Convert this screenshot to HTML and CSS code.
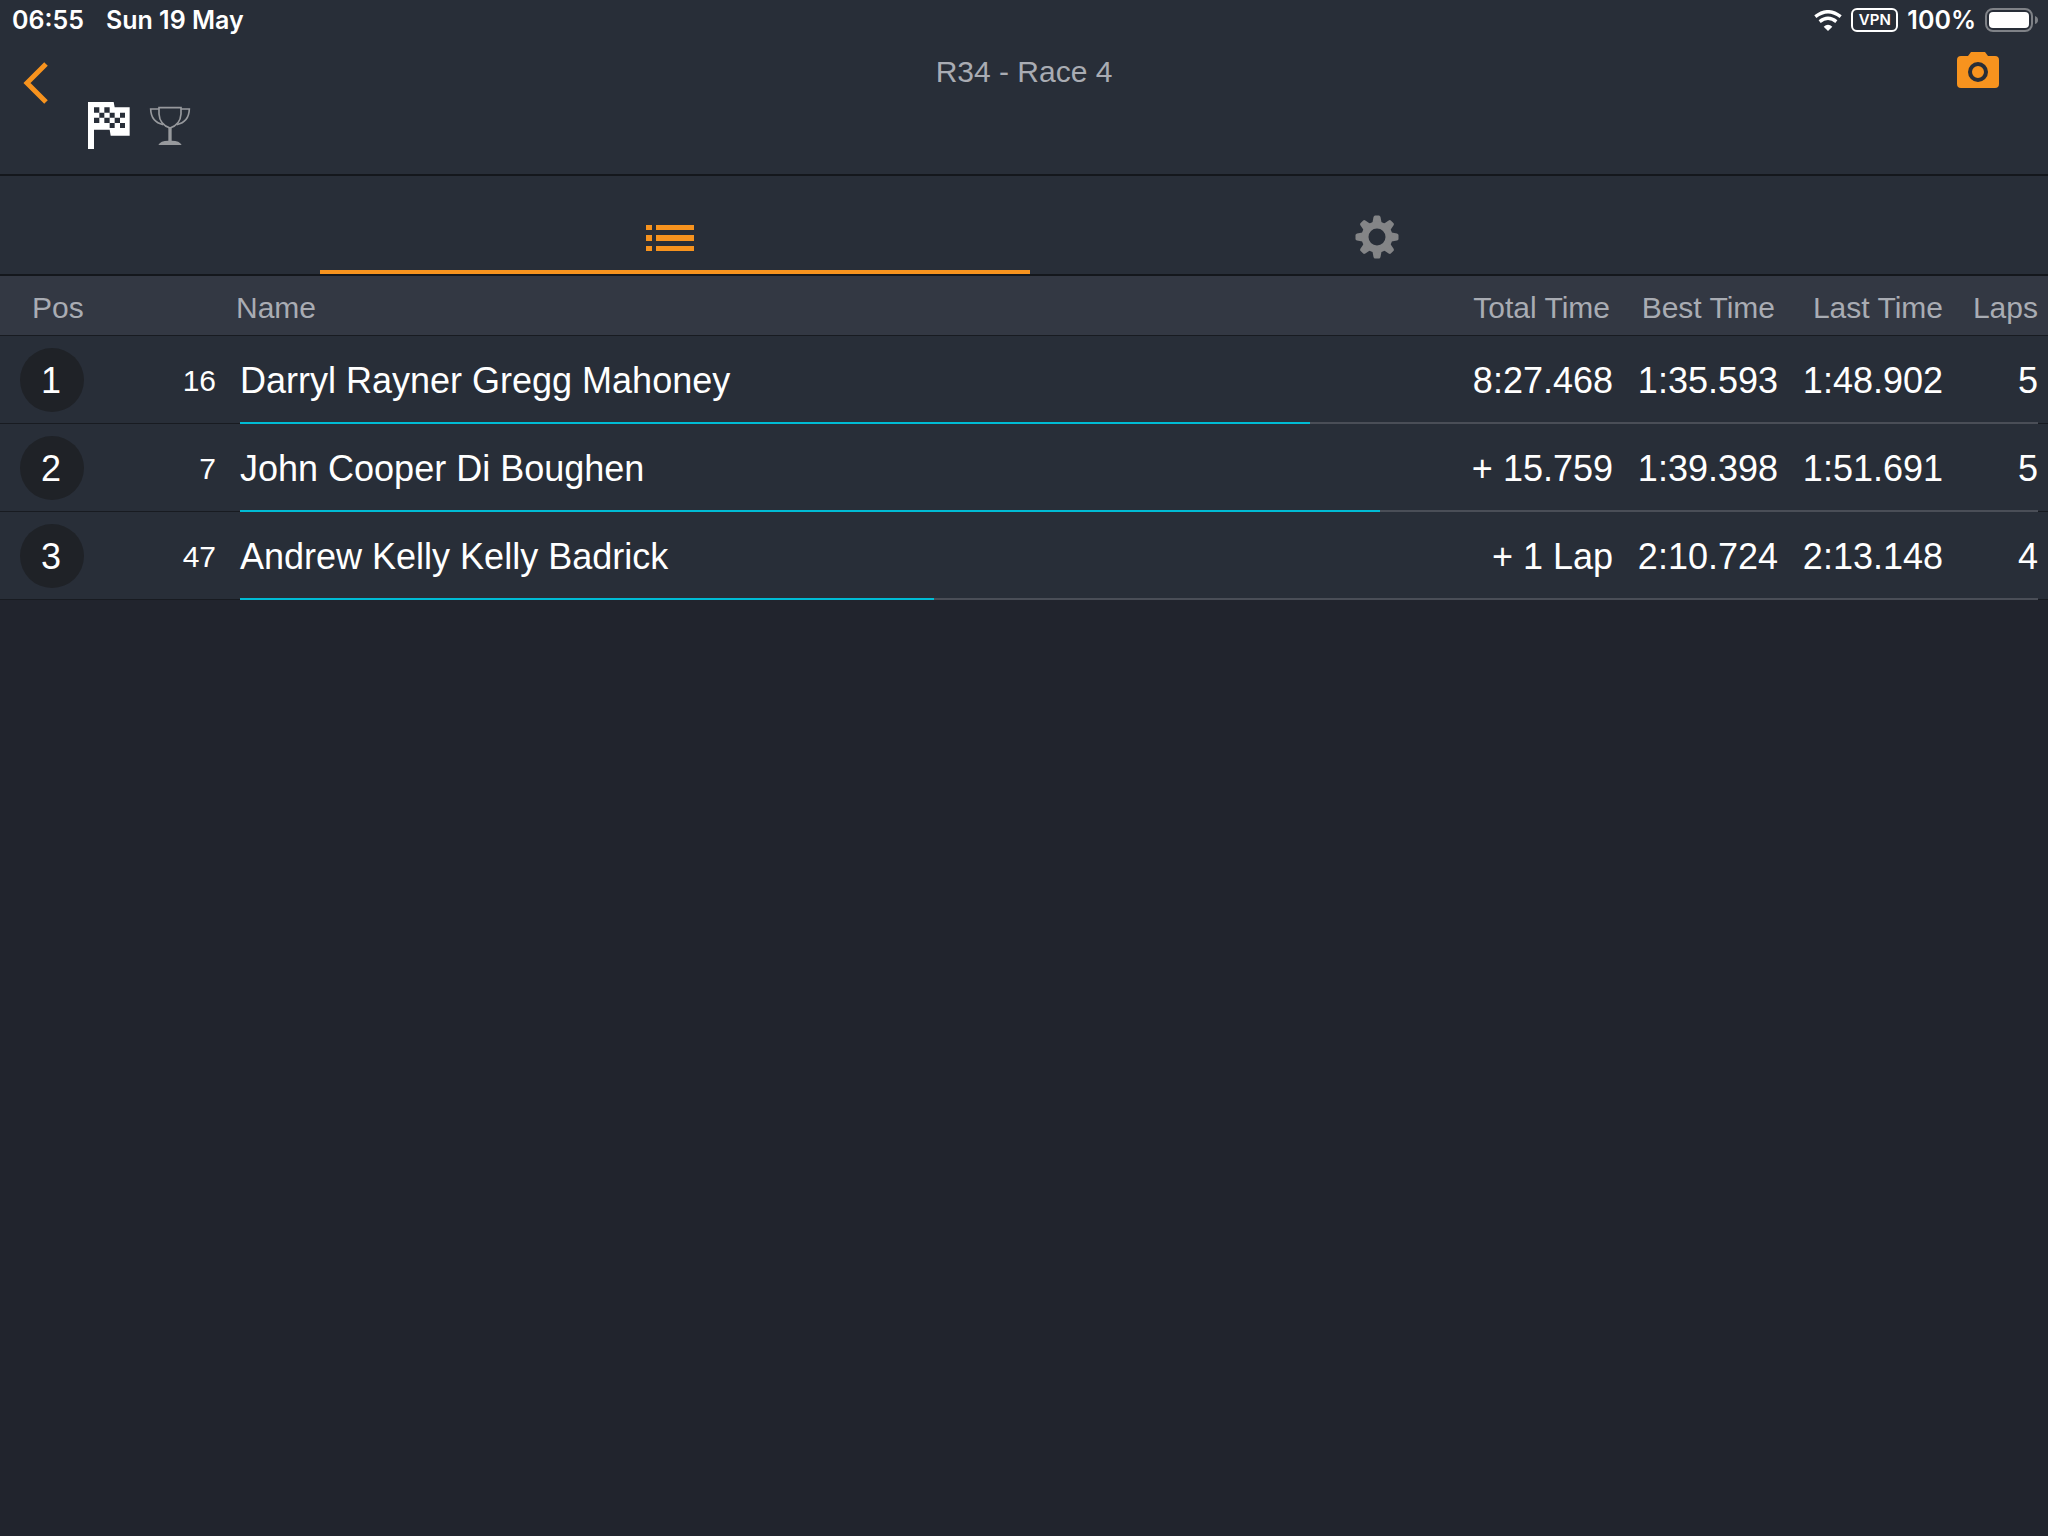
FILE: index.html
```html
<!DOCTYPE html>
<html lang="en">
<head>
<meta charset="utf-8">
<meta name="viewport" content="width=device-width, initial-scale=1">
<title>R34 - Race 4</title>
<link rel="stylesheet" href="styles.css">
</head>
<body>
<div class="status-bar">
  <div class="status-group status-left">
    <time>06:55</time>
    <span>Sun 19 May</span>
  </div>
  <div class="status-group status-right">
    <svg class="wifi" viewBox="0 0 84 63" aria-hidden="true">
      <path d="M4 20 Q42 -10 80 20" fill="none" stroke="#fff" stroke-width="10"/>
      <path d="M17 35 Q42 15 67 35" fill="none" stroke="#fff" stroke-width="10"/>
      <path d="M42 63 L29 50 Q42 39 55 50 Z" fill="#fff"/>
    </svg>
    <span class="vpn">VPN</span>
    <span>100%</span>
    <svg class="battery" viewBox="0 0 54 24" aria-hidden="true">
      <rect x="1" y="1" width="46" height="22" rx="7" fill="none" stroke="#7f8287" stroke-width="2"/>
      <rect x="4" y="4" width="40" height="16" rx="4" fill="#fff"/>
      <path d="M50 8 Q53 9 53 12 Q53 15 50 16 Z" fill="#7f8287"/>
    </svg>
  </div>
</div>

<header class="nav-bar">
  <div class="nav-left">
    <button class="icon-button" type="button" aria-label="Back">
      <svg class="chevron" viewBox="0 0 26 44" aria-hidden="true">
        <path d="M23 3 L4 22 L23 41" fill="none" stroke="#f7931e" stroke-width="5"/>
      </svg>
    </button>
    <div class="race-flags">
      <svg class="flag" viewBox="0 0 132 147" role="img" aria-label="Finished">
        <path d="M3 3 H80 L83 19 H128 V104 H71 L68 86 H21 V144 H3 Z" fill="#fff"/>
        <path d="M21 19h16v16h-16z M52 19h16v16h-16z M37 35h15v15h-15z M68 35h15v15h-15z M99 35h15v15h-15z M21 50h16v16h-16z M52 50h16v16h-16z M83 50h16v16h-16z M68 66h15v15h-15z M99 66h15v15h-15z" fill="#282e38"/>
      </svg>
      <svg class="trophy" viewBox="0 0 126 120" role="img" aria-label="Results">
        <g fill="none" stroke="#97999d" stroke-width="5">
          <path d="M30 5 H96 V24 Q94 56 63 66 Q32 56 30 24 Z"/>
          <path d="M30 9 H5 Q6 48 43 56"/>
          <path d="M96 9 H121 Q120 48 83 56"/>
        </g>
        <path d="M58 64 H68 V104 Q92 104 98 117 H28 Q34 104 58 104 Z" fill="#97999d"/>
      </svg>
    </div>
  </div>
  <h1 class="title">R34 - Race 4</h1>
  <div class="nav-right">
    <button class="icon-button" type="button" aria-label="Take photo">
      <svg class="camera" viewBox="0 0 42 36" aria-hidden="true">
        <path d="M4 4 H11 L14 0 H28 L31 4 H38 Q42 4 42 8 V32 Q42 36 38 36 H4 Q0 36 0 32 V8 Q0 4 4 4 Z" fill="#f7931e"/>
        <circle cx="21" cy="20" r="8" fill="none" stroke="#282e38" stroke-width="4"/>
      </svg>
    </button>
  </div>
</header>

<nav class="tabs">
  <button class="tab tab-active" type="button" aria-label="Results list">
    <svg class="list-icon" viewBox="0 0 48 28" aria-hidden="true">
      <path d="M0 1h6v5H0z M10 1h38v5H10z M0 11h6v6H0z M10 11h38v6H10z M0 22h6v5H0z M10 22h38v5H10z" fill="#f7931e"/>
    </svg>
  </button>
  <button class="tab" type="button" aria-label="Settings">
    <svg class="gear" viewBox="-22 -22 44 44" aria-hidden="true">
      <defs><path id="tooth" d="M-5 -12 L-3.500 -20 Q-3 -21.500 -2 -21.500 H2 Q3 -21.500 3.500 -20 L5 -12 Z"/></defs>
      <g fill="#848587">
        <use href="#tooth"/>
        <use href="#tooth" transform="rotate(45)"/>
        <use href="#tooth" transform="rotate(90)"/>
        <use href="#tooth" transform="rotate(135)"/>
        <use href="#tooth" transform="rotate(180)"/>
        <use href="#tooth" transform="rotate(225)"/>
        <use href="#tooth" transform="rotate(270)"/>
        <use href="#tooth" transform="rotate(315)"/>
      </g>
      <circle r="12" fill="none" stroke="#848587" stroke-width="7"/>
    </svg>
  </button>
</nav>

<table class="results">
  <colgroup>
    <col class="col-pos"><col class="col-number"><col>
    <col class="col-total"><col class="col-time"><col class="col-time"><col class="col-laps">
  </colgroup>
  <thead>
    <tr>
      <th class="head-pos" scope="col">Pos</th>
      <td></td>
      <th class="head-name" scope="col">Name</th>
      <th class="head-time" scope="col">Total Time</th>
      <th class="head-time" scope="col">Best Time</th>
      <th scope="col">Last Time</th>
      <th class="laps" scope="col">Laps</th>
    </tr>
  </thead>
  <tbody>
    <tr>
      <td class="pos"><span class="badge">1</span></td>
      <td class="number">16</td>
      <td class="name">Darryl Rayner Gregg Mahoney</td>
      <td>8:27.468</td>
      <td>1:35.593</td>
      <td>1:48.902</td>
      <td class="laps">5<div class="track"><div class="fill" style="width: 59.5%"></div></div></td>
    </tr>
    <tr>
      <td class="pos"><span class="badge">2</span></td>
      <td class="number">7</td>
      <td class="name">John Cooper Di Boughen</td>
      <td>+ 15.759</td>
      <td>1:39.398</td>
      <td>1:51.691</td>
      <td class="laps">5<div class="track"><div class="fill" style="width: 63.4%"></div></div></td>
    </tr>
    <tr>
      <td class="pos"><span class="badge">3</span></td>
      <td class="number">47</td>
      <td class="name">Andrew Kelly Kelly Badrick</td>
      <td>+ 1 Lap</td>
      <td>2:10.724</td>
      <td>2:13.148</td>
      <td class="laps">4<div class="track"><div class="fill" style="width: 38.6%"></div></div></td>
    </tr>
  </tbody>
</table>
</body>
</html>
```
FILE: styles.css
```css
* {
  box-sizing: border-box;
}

body {
  margin: 0;
  min-height: 100vh;
  background: #21242d;
  color: #fff;
  font-family: "Liberation Sans", Arial, sans-serif;
}

svg {
  display: block;
}

button {
  border: 0;
  background: none;
  padding: 0;
  cursor: pointer;
}

/* Status bar */

.status-bar {
  display: flex;
  justify-content: space-between;
  align-items: center;
  height: 40px;
  padding: 0 9px 0 12px;
  background: #282e38;
  font: 600 25px/40px Inter, sans-serif;
}

.status-group {
  display: flex;
  align-items: center;
}

.status-left {
  gap: 22px;
}

.status-right {
  gap: 9px;
}

.wifi {
  width: 28px;
  height: 21px;
}

.vpn {
  width: 47px;
  height: 24px;
  border: 2px solid #fff;
  border-radius: 6px;
  font-size: 15px;
  line-height: 20px;
  text-align: center;
}

.battery {
  width: 54px;
  height: 24px;
}

/* Navigation bar */

.nav-bar {
  display: grid;
  grid-template-columns: 1fr auto 1fr;
  height: 136px;
  background: #282e38;
  border-bottom: 2px solid #14171c;
}

.nav-left {
  display: flex;
  align-items: flex-start;
  gap: 38px;
  padding: 21px 0 0 23px;
}

.chevron {
  width: 26px;
  height: 44px;
}

.race-flags {
  display: flex;
  align-items: center;
  gap: 18px;
  padding-top: 40px;
}

.flag {
  width: 44px;
  height: 49px;
}

.trophy {
  width: 42px;
  height: 40px;
}

.title {
  margin: 0;
  padding-top: 14px;
  color: #a9acb3;
  font-size: 30px;
  font-weight: 400;
  line-height: 36px;
}

.nav-right {
  display: flex;
  justify-content: flex-end;
  align-items: flex-start;
  padding: 12px 49px 0 0;
}

.camera {
  width: 42px;
  height: 36px;
}

/* Tabs */

.tabs {
  display: flex;
  height: 100px;
  padding: 0 320px;
  background: #282e38;
  border-bottom: 2px solid #14171c;
}

.tab {
  display: flex;
  flex: 1;
  justify-content: center;
  align-items: flex-end;
  padding: 0 5px 15px 0;
}

.tab-active {
  flex: 0 0 710px;
  padding: 0 10px 18px 0;
  border-bottom: 4px solid #f7931e;
}

.list-icon {
  width: 48px;
  height: 28px;
}

.gear {
  width: 44px;
  height: 44px;
}

/* Results */

.results {
  width: 100%;
  table-layout: fixed;
  border-collapse: separate;
  border-spacing: 0;
  text-align: right;
}

.col-pos { width: 104px; }
.col-number { width: 112px; }
.col-total { width: 190px; }
.col-time { width: 165px; }
.col-laps { width: 105px; }

.results th,
.results td {
  padding: 0;
  border-bottom: 1px solid #181b21;
}

.results thead {
  background: #333843;
  color: #a9acb3;
  font-size: 30px;
  line-height: 34px;
}

.results thead tr {
  height: 60px;
}

.results thead th {
  padding-top: 4px;
  font-weight: 400;
}

.results thead .head-pos {
  padding-left: 32px;
  text-align: left;
}

.results thead .head-name {
  padding-left: 20px;
  text-align: left;
}

.results thead .head-time {
  padding-right: 3px;
}

.results tbody {
  background: #282e38;
  font-size: 36px;
  line-height: 40px;
}

.results tbody tr {
  position: relative;
  height: 88px;
}

.results tbody td {
  padding-top: 3px;
}

.results tbody .pos {
  padding: 0 0 0 20px;
}

.badge {
  display: block;
  width: 64px;
  height: 64px;
  padding-right: 2px;
  border-radius: 50%;
  background: #1f2227;
  line-height: 66px;
  text-align: center;
}

.results tbody .number {
  font-size: 30px;
}

.results tbody .name {
  padding-left: 24px;
  text-align: left;
}

.results .laps {
  padding-right: 10px;
}

.track {
  position: absolute;
  right: 10px;
  bottom: 0;
  left: 240px;
  height: 2px;
  background: #4a4e57;
}

.fill {
  height: 100%;
  background: #00bcd4;
}
```
